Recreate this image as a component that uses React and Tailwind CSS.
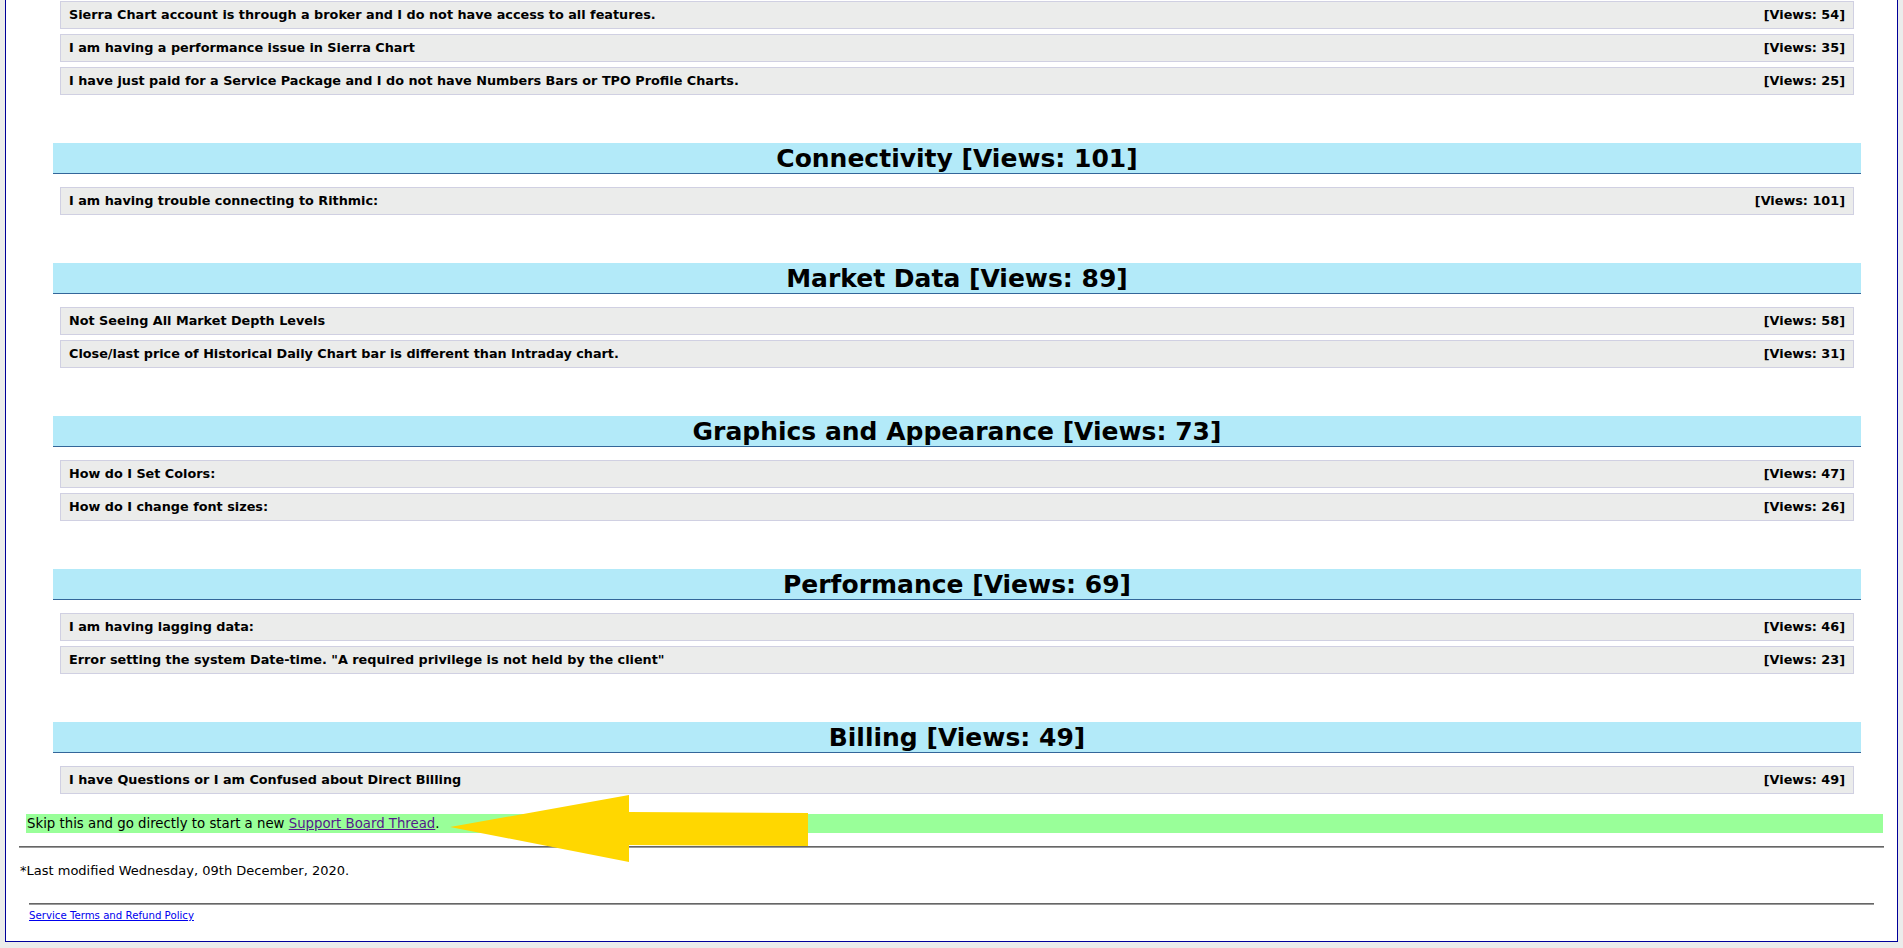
const topRows = [
  ["Sierra Chart account is through a broker and I do not have access to all features.", 54],
  ["I am having a performance issue in Sierra Chart", 35],
  ["I have just paid for a Service Package and I do not have Numbers Bars or TPO Profile Charts.", 25],
];

const sections = [
  {
    title: "Connectivity",
    views: 101,
    rows: [["I am having trouble connecting to Rithmic:", 101]],
  },
  {
    title: "Market Data",
    views: 89,
    rows: [
      ["Not Seeing All Market Depth Levels", 58],
      ["Close/last price of Historical Daily Chart bar is different than Intraday chart.", 31],
    ],
  },
  {
    title: "Graphics and Appearance",
    views: 73,
    rows: [
      ["How do I Set Colors:", 47],
      ["How do I change font sizes:", 26],
    ],
  },
  {
    title: "Performance",
    views: 69,
    rows: [
      ["I am having lagging data:", 46],
      ['Error setting the system Date-time. "A required privilege is not held by the client"', 23],
    ],
  },
  {
    title: "Billing",
    views: 49,
    rows: [["I have Questions or I am Confused about Direct Billing", 49]],
  },
];

function Rows({ rows }) {
  return (
    <div className="flex flex-col gap-[5px]">
      {rows.map(([text, views]) => (
        <a
          key={text}
          href="#"
          className="ml-[54px] w-[1794px] h-[28px] border border-[#d0d0e2] bg-[#ebeceb] flex items-center justify-between px-[8px] text-[12.8px] font-bold text-black"
        >
          <span>{text}</span>
          <span>[Views: {views}]</span>
        </a>
      ))}
    </div>
  );
}

export default function App() {
  return (
    <div className="relative min-h-screen bg-[#ebeceb] pb-[5px] font-['DejaVu_Sans',sans-serif] text-black">
      <div className="ml-[5px] w-[1893px] border-x border-b border-[#000099] bg-white pt-[1px] pb-[19px]">
        <Rows rows={topRows} />

        {sections.map((s) => (
          <div key={s.title} className="mt-[48px]">
            <h2 className="ml-[47px] w-[1808px] h-[31px] bg-[#b3eaf9] border-b border-[#336699] pt-[1px] text-center text-[25px] leading-[29px] font-bold">
              {s.title} [Views: {s.views}]
            </h2>
            <div className="mt-[13px]">
              <Rows rows={s.rows} />
            </div>
          </div>
        ))}

        {/* skip bar */}
        <div className="mt-[20px] ml-[20px] w-[1857px] h-[19px] bg-[#99ff99] px-[1px] text-[13.3px] leading-[19px]">
          Skip this and go directly to start a new{" "}
          <a href="#" className="text-[#551a8b] underline">
            Support Board Thread
          </a>
          .
        </div>

        <div className="mt-[13px] ml-[13px] w-[1865px] border-t border-b border-t-[#666666] border-b-[#9a9a9a]" />

        <p className="mt-[15px] ml-[14px] text-[13px] leading-[16px]">
          *Last modified Wednesday, 09th December, 2020.
        </p>

        <div className="mt-[24px] ml-[23px] w-[1845px] border-t border-b border-t-[#666666] border-b-[#9a9a9a]" />

        <div className="mt-[4px] ml-[23px] text-[10.2px] leading-[13px]">
          <a href="#" className="text-[#0000ee] underline">
            Service Terms and Refund Policy
          </a>
        </div>
      </div>

      {/* yellow arrow pointing at the link */}
      <svg
        className="absolute left-[449px] top-[795px] pointer-events-none"
        width="360"
        height="68"
        viewBox="0 0 360 68"
      >
        <polygon
          points="1,32 180,0 180,17 359,18 359,51 180,50 180,67"
          fill="#ffd700"
        />
      </svg>
    </div>
  );
}
